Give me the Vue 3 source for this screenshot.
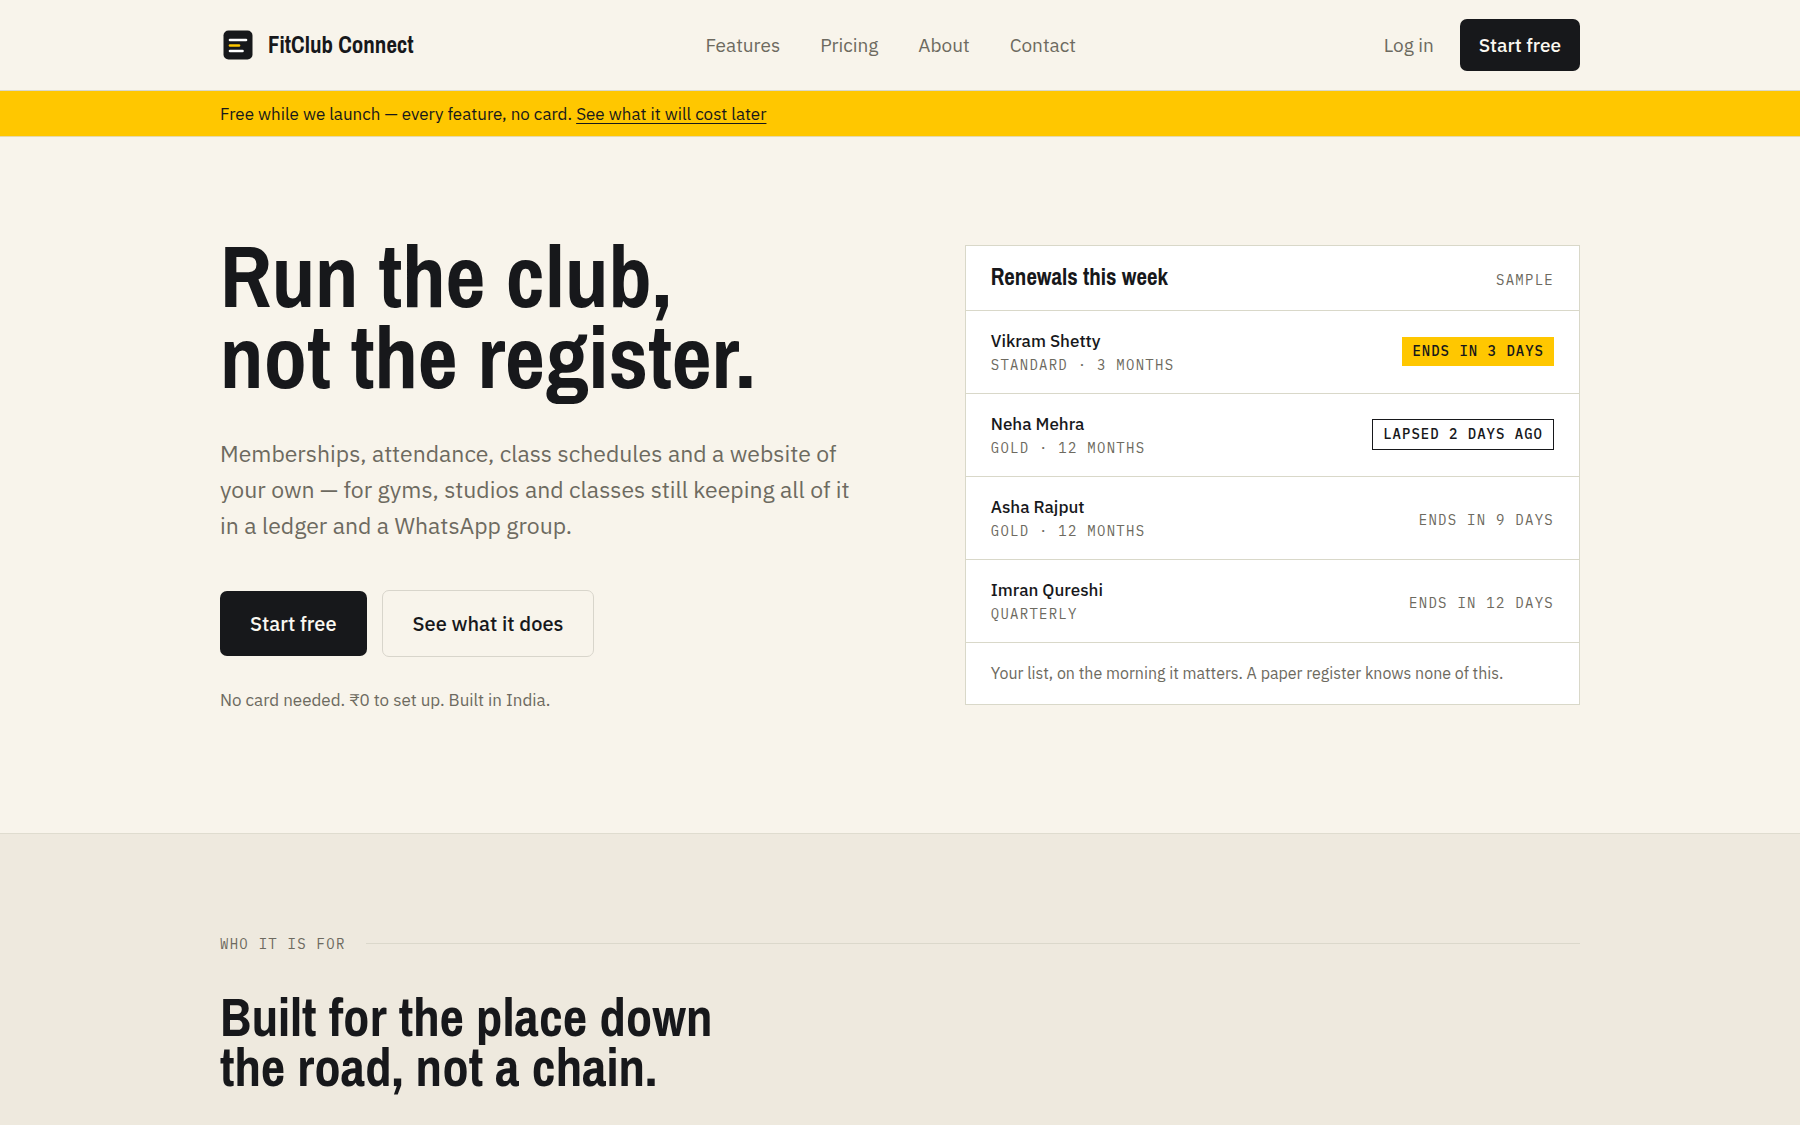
<script setup>
const nav = ['Features', 'Pricing', 'About', 'Contact']

const renewals = [
  { name: 'Vikram Shetty', plan: 'STANDARD · 3 MONTHS', status: 'ENDS IN 3 DAYS', tone: 'due' },
  { name: 'Neha Mehra', plan: 'GOLD · 12 MONTHS', status: 'LAPSED 2 DAYS AGO', tone: 'lapsed' },
  { name: 'Asha Rajput', plan: 'GOLD · 12 MONTHS', status: 'ENDS IN 9 DAYS', tone: 'later' },
  { name: 'Imran Qureshi', plan: 'QUARTERLY', status: 'ENDS IN 12 DAYS', tone: 'later' },
]
</script>

<template>
  <div class="page">
    <header class="site-header">
      <div class="wrap header-row">
        <a class="brand" href="#">
          <svg class="brand-mark" viewBox="0 0 36 36" aria-hidden="true">
            <rect x="3.5" y="3.5" width="29" height="29" rx="5" fill="#17181b" />
            <g stroke-width="2.6" stroke-linecap="round" fill="none">
              <path d="M10 13H26" stroke="#fff" />
              <path d="M10 18.5H19" stroke="#ffc700" />
              <path d="M10 24H22.5" stroke="#fff" />
            </g>
          </svg>
          <span>FitClub Connect</span>
        </a>
        <nav class="nav" aria-label="Main">
          <a v-for="item in nav" :key="item" href="#">{{ item }}</a>
        </nav>
        <div class="account">
          <a class="login" href="#">Log in</a>
          <button type="button" class="btn btn-small btn-dark">Start free</button>
        </div>
      </div>
    </header>

    <div class="banner">
      <p class="wrap">
        Free while we launch — every feature, no card.
        <a href="#">See what it will cost later</a>
      </p>
    </div>

    <main class="main">
      <section class="hero">
        <div class="wrap hero-grid">
          <div class="pitch">
            <h1>Run the club,<br />not the register.</h1>
            <p class="lead">
              Memberships, attendance, class schedules and a website of your own — for gyms, studios
              and classes still keeping all of it in a ledger and a WhatsApp group.
            </p>
            <div class="actions">
              <button type="button" class="btn btn-large btn-dark">Start free</button>
              <button type="button" class="btn btn-large btn-outline">See what it does</button>
            </div>
            <p class="note">No card needed. ₹0 to set up. Built in India.</p>
          </div>

          <aside class="card" aria-labelledby="renewals-title">
            <div class="card-head">
              <h2 id="renewals-title">Renewals this week</h2>
              <span class="label">SAMPLE</span>
            </div>
            <ul>
              <li v-for="r in renewals" :key="r.name">
                <div>
                  <div class="name">{{ r.name }}</div>
                  <div class="label">{{ r.plan }}</div>
                </div>
                <span class="label" :class="r.tone">{{ r.status }}</span>
              </li>
            </ul>
            <p class="card-foot">Your list, on the morning it matters. A paper register knows none of this.</p>
          </aside>
        </div>
      </section>

      <section class="audience">
        <div class="wrap">
          <div class="eyebrow"><span class="label">WHO IT IS FOR</span></div>
          <h2>Built for the place down<br />the road, not a chain.</h2>
        </div>
      </section>
    </main>
  </div>
</template>

<style>
body {
  margin: 0;
  background: #f8f4eb;
}
</style>

<style scoped>
.page {
  --ink: #17181b;
  --muted: #6d6a60;
  --line: #d9d8c9;
  --yellow: #ffc700;
  display: flex;
  flex-direction: column;
  min-height: 100vh;
  color: var(--ink);
  font-family: 'IBM Plex Sans', 'Open Sans', 'Noto Sans', sans-serif;
  font-size: 19px;
}
h1,
h2,
p,
ul {
  margin: 0;
  padding: 0;
}
h1,
h2,
.brand {
  font-family: 'Archivo Narrow', Roboto, sans-serif;
  font-weight: 800;
}
a {
  color: inherit;
  text-decoration: none;
}
.wrap {
  box-sizing: border-box;
  width: 100%;
  max-width: 1408px;
  margin: 0 auto;
  padding: 0 24px;
}

.site-header {
  border-bottom: 1px solid var(--line);
}
.header-row {
  display: flex;
  align-items: center;
  justify-content: space-between;
  min-height: 90px;
}
.brand {
  display: flex;
  align-items: center;
  gap: 12px;
  font-size: 23px;
}
.brand span {
  padding-bottom: 2px;
}
.brand-mark {
  width: 36px;
  height: 36px;
}
.nav {
  display: flex;
  gap: 40px;
  padding-bottom: 1px;
  color: var(--muted);
}
.account {
  display: flex;
  align-items: center;
  gap: 10px;
}
.login {
  padding: 0 16px 1px;
  color: var(--muted);
}

.btn {
  border: 0;
  border-radius: 7px;
  font-family: inherit;
  font-weight: 500;
  cursor: pointer;
}
.btn-small {
  padding: 0 19px;
  font-size: 19px;
  line-height: 52px;
}
.btn-large {
  padding: 0 30px;
  font-size: 20px;
  line-height: 65px;
}
.btn-dark {
  background: var(--ink);
  color: #fbf8f1;
}
.btn-outline {
  border: 1px solid #d8d5cb;
  background: transparent;
  color: var(--ink);
}

.banner {
  padding-top: 1px;
  border-bottom: 1px solid #e6d9ac;
  background: var(--yellow);
  font-size: 17px;
  line-height: 44px;
}
.banner a {
  text-decoration: underline;
  text-underline-offset: 3px;
}

.main {
  display: flex;
  flex: 1;
  flex-direction: column;
}
.hero {
  padding: 98px 0 119px;
  border-bottom: 1px solid #dfdccf;
}
.hero-grid {
  display: grid;
  grid-template-columns: 1.1fr 1fr;
  align-items: center;
  gap: 68px;
}
h1 {
  font-size: 87px;
  line-height: 81px;
}
.lead {
  max-width: 640px;
  margin-top: 38px;
  color: var(--muted);
  font-size: 23px;
  line-height: 36px;
}
.actions {
  display: flex;
  align-items: center;
  gap: 15px;
  margin-top: 47px;
}
.note {
  margin-top: 30px;
  color: var(--muted);
  font-size: 17px;
  line-height: 27px;
}

.card {
  border: 1px solid var(--line);
  background: #fff;
}
.card-head,
.card li {
  display: flex;
  align-items: center;
  justify-content: space-between;
  box-sizing: border-box;
  padding: 0 25px;
  border-bottom: 1px solid var(--line);
}
.card-head {
  align-items: baseline;
  padding: 18px 25px 19px;
}
.card-head h2 {
  font-size: 23px;
  line-height: 25px;
}
.card li {
  min-height: 83px;
}
.label {
  color: var(--muted);
  font-family: 'IBM Plex Mono', 'Liberation Mono', monospace;
  font-size: 14px;
  line-height: 21px;
  letter-spacing: 0.09em;
}
.name {
  font-size: 17px;
  font-weight: 500;
  line-height: 27px;
}
.due,
.lapsed {
  padding: 4px 10px;
  color: var(--ink);
  font-weight: 500;
  letter-spacing: 1px;
}
.due {
  background: var(--yellow);
}
.lapsed {
  border: 1px solid var(--ink);
}
.later {
  padding-top: 5px;
}
.card-foot {
  padding: 0 25px;
  color: var(--muted);
  font-size: 16px;
  line-height: 61px;
}

.audience {
  flex: 1;
  padding: 98px 0 32px;
  background: #eee9de;
}
.eyebrow {
  display: flex;
  align-items: center;
  gap: 20px;
}
.eyebrow .label {
  padding-top: 2px;
}
.eyebrow::after {
  flex: 1;
  height: 1px;
  background: #dbd8cb;
  content: '';
}
.audience h2 {
  margin-top: 37px;
  font-size: 53px;
  line-height: 50px;
}
</style>
